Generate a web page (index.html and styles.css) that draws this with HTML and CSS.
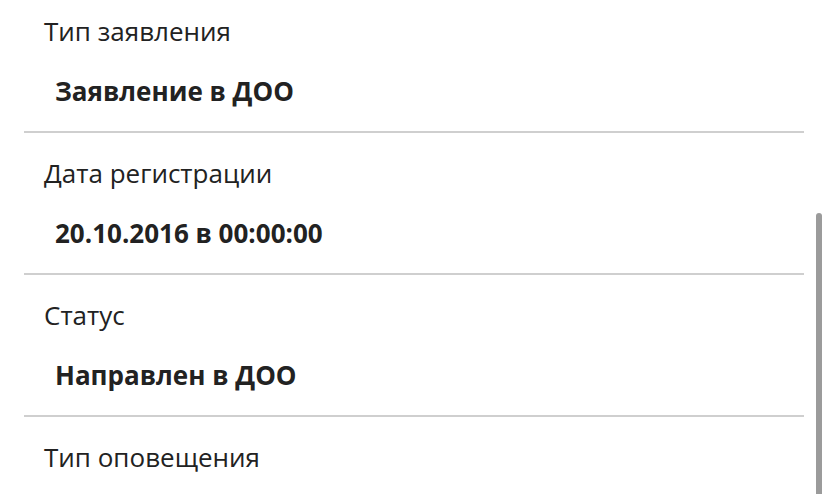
FILE: index.html
```html
<!DOCTYPE html>
<html lang="ru">
<head>
<meta charset="utf-8">
<link rel="stylesheet" href="styles.css">
</head>
<body>
<div class="view">
  <div class="list">
    <div class="item first">
      <div class="label">Тип заявления</div>
      <div class="value">Заявление в ДОО</div>
    </div>
    <div class="item">
      <div class="label">Дата регистрации</div>
      <div class="value">20.10.2016 в 00:00:00</div>
    </div>
    <div class="item">
      <div class="label">Статус</div>
      <div class="value">Направлен в ДОО</div>
    </div>
    <div class="item last">
      <div class="label">Тип оповещения</div>
    </div>
  </div>
  <div class="scrollbar"></div>
</div>
</body>
</html>
```
FILE: styles.css
```css
html, body {
  margin: 0;
  padding: 0;
  background: #fff;
}
.view {
  position: relative;
  width: 828px;
  height: 494px;
  overflow: hidden;
  font-family: "Open Sans", "Noto Sans", sans-serif;
  color: #222;
}
.list {
  width: 780px;
  margin-left: 24px;
}
.item {
  padding: 22px 0 24px;
  border-bottom: 2px solid #cfcfcf;
}
.item.first {
  padding-top: 13px;
}
.item.last {
  border-bottom: none;
}
.label {
  padding-left: 20px;
  font-size: 26px;
  line-height: 36px;
  font-weight: 400;
}
.value {
  margin-top: 26px;
  padding-left: 31px;
  font-size: 26px;
  line-height: 32px;
  font-weight: 700;
}
.scrollbar {
  position: absolute;
  right: 6px;
  top: 213px;
  width: 6px;
  height: 300px;
  border-radius: 3px;
  background: #9b9b9b;
}
```
